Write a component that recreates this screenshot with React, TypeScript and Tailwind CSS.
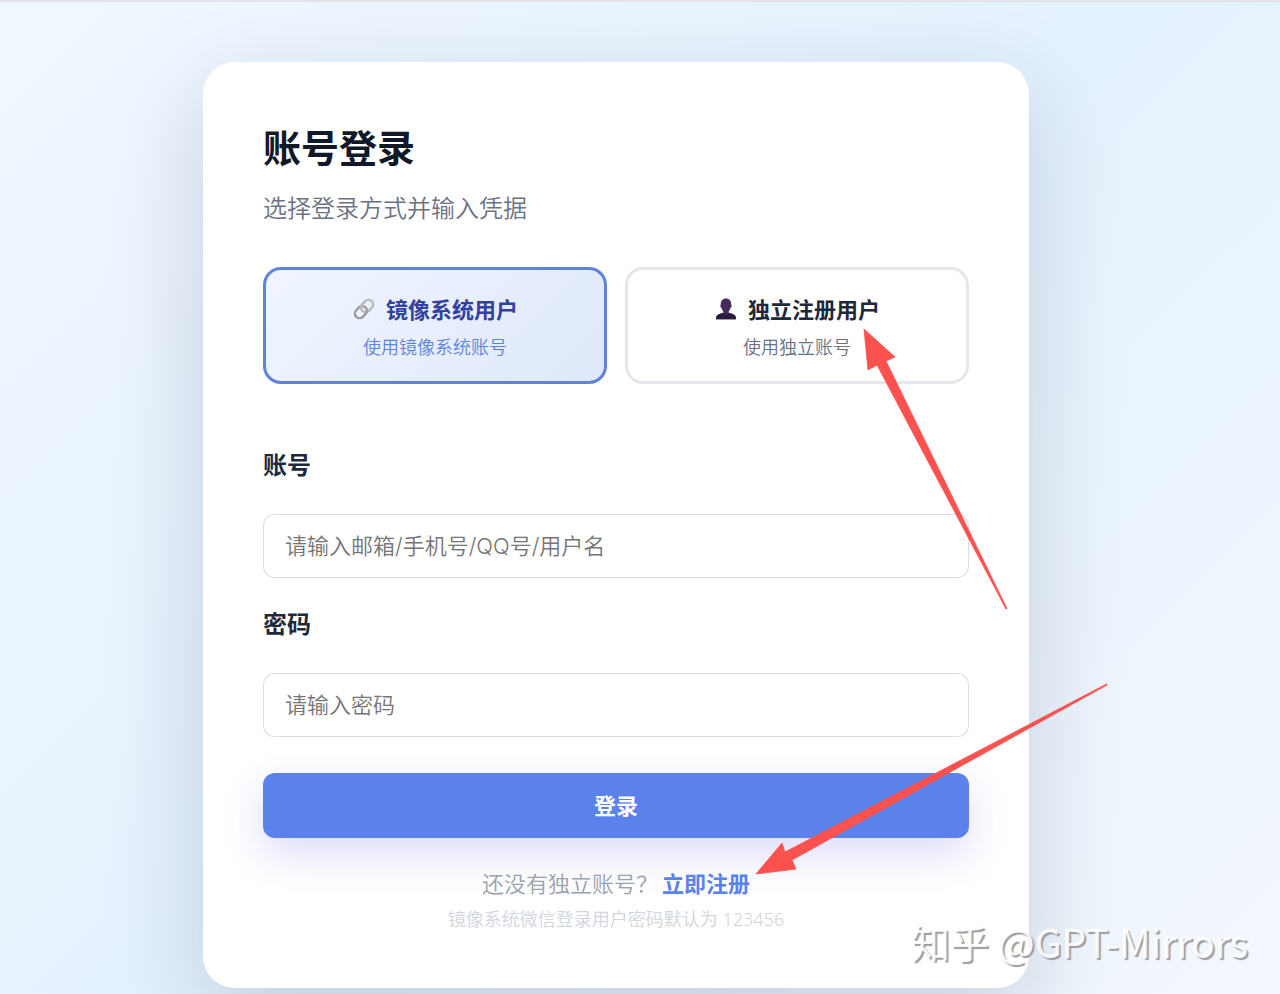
import { useState } from "react";
import clsx from "clsx";

function LinkIcon() {
  return (
    <svg viewBox="0 0 24 24" className="size-6 shrink-0" fill="none" aria-hidden="true">
      <g transform="rotate(-45 12 12)" strokeWidth="2.4">
        <rect x="9.8" y="7.400" width="13.200" height="9.200" rx="4.600" stroke="#b8b8ba" />
        <rect x="1" y="7.400" width="13.200" height="9.200" rx="4.600" stroke="#9b9b9e" />
        <path d="M9.800 12a4.600 4.600 0 0 1 4.600-4.600" stroke="#b8b8ba" />
      </g>
    </svg>
  );
}

function UserIcon() {
  return (
    <svg viewBox="0 0 24 24" className="size-6 shrink-0" aria-hidden="true">
      <path
        d="M2 22.2c0-3.2 1.2-4.5 3.5-5.2l3.2-1.1c.7-.3.8-1.3.3-2-.9-1-1.4-2.2-1.7-3.500-.6-.1-1-.7-1-1.500 0-.7.2-1.200.6-1.300C6.600 3.700 8.700 1.400 12 1.400s5.400 2.300 5.100 6.200c.4.1.6.6.6 1.300 0 .8-.4 1.400-1 1.500-.3 1.300-.8 2.500-1.700 3.500-.5.7-.4 1.700.3 2l3.200 1.100c2.300.7 3.500 2 3.500 5.200z"
        fill="#432b5e"
      />
      <path d="M2 22.200c0-3.200 1.200-4.500 3.500-5.200l3-1c1 1.200 2.100 1.700 3.500 1.700s2.500-.5 3.500-1.700l3 1c2.300.7 3.500 2 3.500 5.200z" fill="#2c1a3d" />
    </svg>
  );
}

const MODES = [
  { id: "mirror", title: "镜像系统用户", desc: "使用镜像系统账号", icon: LinkIcon },
  { id: "standalone", title: "独立注册用户", desc: "使用独立账号", icon: UserIcon },
];

const FIELDS = [
  { id: "account", label: "账号", type: "text", placeholder: "请输入邮箱/手机号/QQ号/用户名" },
  { id: "password", label: "密码", type: "password", placeholder: "请输入密码" },
];

function Arrows() {
  return (
    <svg
      viewBox="0 0 826 926"
      className="pointer-events-none absolute inset-0 size-full overflow-visible"
      fill="#fb524f"
      stroke="#fb524f"
      strokeWidth="0.8"
      strokeLinejoin="round"
      aria-hidden="true"
    >
      <path d="M661 267 692 295 683 299 804 546.500 803 547 674 303 665 308Z" />
      <path d="M553 812 579 781 582 790 903.500 622 904 623 589 798 593 807Z" />
    </svg>
  );
}

export default function App() {
  const [mode, setMode] = useState("mirror");

  return (
    <div className="relative min-h-screen overflow-hidden border-t-2 border-[#e1e5ea] bg-linear-135 from-[#f1f7ff] via-[#e4f2fd] to-[#f3f7fd] font-['Noto_Sans','Noto_Sans_CJK_SC',sans-serif]">
      <main className="flex justify-center pt-15 pr-12 pb-1">
        <section className="relative w-full max-w-[826px] rounded-[32px] bg-white px-15 pt-[59px] pb-[54px] shadow-[0_32px_96px_rgba(30,41,80,0.18)]">
          <h1 className="text-[38px] leading-[52px] font-bold text-[#111827]">账号登录</h1>
          <p className="mt-4 text-2xl leading-[38px] font-[350] text-gray-500">选择登录方式并输入凭据</p>

          <div className="mt-10 grid grid-cols-2 gap-[18px]">
            {MODES.map(({ id, title, desc, icon: Icon }) => {
              const active = mode === id;
              return (
                <button
                  key={id}
                  type="button"
                  aria-pressed={active}
                  onClick={() => setMode(id)}
                  className={clsx(
                    "rounded-[18px] border-3 px-4 pt-[23px] pb-5 text-center",
                    active
                      ? "border-[#5f82db] bg-linear-135 from-[#f0f5ff] to-[#dfe9fb]"
                      : "border-gray-200 bg-white"
                  )}
                >
                  <span
                    className={clsx(
                      "flex items-center justify-center gap-2.5 text-[22px] leading-8 font-bold",
                      active ? "text-[#3340a0]" : "text-gray-800"
                    )}
                  >
                    <Icon />
                    {title}
                  </span>
                  <span
                    className={clsx(
                      "mt-2 block text-lg leading-7 font-[350]",
                      active ? "text-[#5f82db]" : "text-gray-500"
                    )}
                  >
                    {desc}
                  </span>
                </button>
              );
            })}
          </div>

          <form className="mt-[63px]" onSubmit={(e) => e.preventDefault()}>
            <div className="flex flex-col gap-7">
              {FIELDS.map((field) => (
                <div key={field.id}>
                  <label htmlFor={field.id} className="block text-2xl leading-[35px] font-bold text-gray-800">
                    {field.label}
                  </label>
                  <input
                    id={field.id}
                    type={field.type}
                    placeholder={field.placeholder}
                    className="mt-8 block h-16 w-full rounded-xl border border-gray-300/80 bg-white px-[21px] font-['Inter','Noto_Sans_CJK_SC',sans-serif] text-[22px] font-[350] text-gray-800 outline-none placeholder:text-[#757575] focus:border-[#5b81eb]"
                  />
                </div>
              ))}
            </div>
            <button
              type="submit"
              className="mt-9 block h-[65px] w-full rounded-xl bg-[#5b81eb] text-[22px] font-bold text-white shadow-[0_16px_40px_rgba(79,80,229,0.2)]"
            >
              登录
            </button>
          </form>

          <p className="mt-[29px] text-center text-[22px] leading-8 font-[350] text-gray-400">
            还没有独立账号？
            <a href="#register" className="ml-1 font-bold text-[#5b81eb]">
              立即注册
            </a>
          </p>
          <p className="mt-[5px] text-center text-lg leading-[30px] font-[350] text-gray-300">
            镜像系统微信登录用户密码默认为 123456
          </p>

          <Arrows />
        </section>
      </main>

      <div className="absolute right-8 bottom-6 font-['Noto_Sans_CJK_SC',sans-serif] text-[39px] leading-[58px] text-white/90 [text-shadow:2px_2px_1px_#9a9da2]">
        知乎 @GPT-Mirrors
      </div>
    </div>
  );
}
